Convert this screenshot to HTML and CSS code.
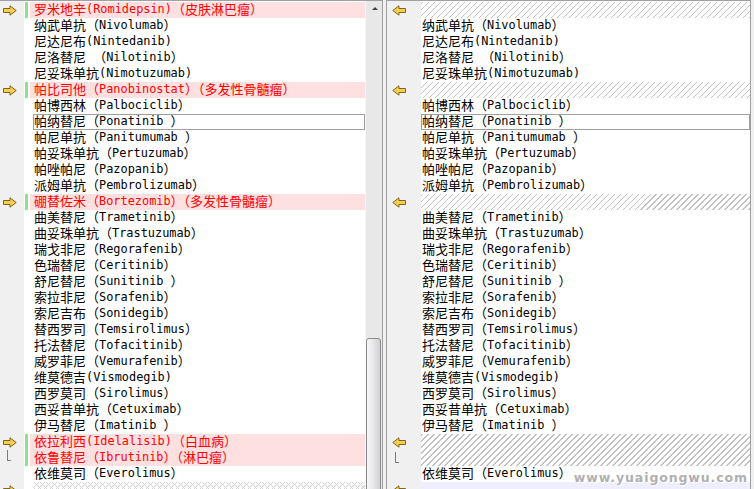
FILE: index.html
```html
<!DOCTYPE html>
<html lang="zh-CN">
<head>
<meta charset="utf-8">
<title>Compare</title>
<link rel="stylesheet" href="styles.css">
</head>
<body>
<div class="app">
  <section class="pane left">
    <div class="gutter gl">
      <div class="g"><svg class="arr" width="14" height="11" viewBox="0 0 14 11"><path d="M0.5 3.5H7V0.8L13.2 5.5L7 10.2V7.5H0.5Z"/></svg></div>
      <div class="g"></div><div class="g"></div><div class="g"></div><div class="g"></div>
      <div class="g"><svg class="arr" width="14" height="11" viewBox="0 0 14 11"><path d="M0.5 3.5H7V0.8L13.2 5.5L7 10.2V7.5H0.5Z"/></svg></div>
      <div class="g"></div><div class="g"></div><div class="g"></div><div class="g"></div><div class="g"></div><div class="g"></div>
      <div class="g"><svg class="arr" width="14" height="11" viewBox="0 0 14 11"><path d="M0.5 3.5H7V0.8L13.2 5.5L7 10.2V7.5H0.5Z"/></svg></div>
      <div class="g"></div><div class="g"></div><div class="g"></div><div class="g"></div><div class="g"></div><div class="g"></div><div class="g"></div>
      <div class="g"></div><div class="g"></div><div class="g"></div><div class="g"></div><div class="g"></div><div class="g"></div><div class="g"></div>
      <div class="g"><svg class="arr" width="14" height="11" viewBox="0 0 14 11"><path d="M0.5 3.5H7V0.8L13.2 5.5L7 10.2V7.5H0.5Z"/></svg></div>
      <div class="g"><span class="brk"></span></div>
      <div class="g"></div>
      <div class="g"><svg class="arr" width="14" height="11" viewBox="0 0 14 11"><path d="M0.5 3.5H7V0.8L13.2 5.5L7 10.2V7.5H0.5Z"/></svg></div>
    </div>
    <div class="text tl">
      <div class="r d">罗米地辛<span class="en">(Romidepsin)</span>（皮肤淋巴瘤）</div>
      <div class="r">纳武单抗（<span class="en">Nivolumab</span>）</div>
      <div class="r">尼达尼布<span class="en">(Nintedanib)</span></div>
      <div class="r">尼洛替尼<span class="en"> </span>（<span class="en">Nilotinib</span>）</div>
      <div class="r">尼妥珠单抗<span class="en">(Nimotuzumab)</span></div>
      <div class="r d">帕比司他（<span class="en">Panobinostat</span>）（多发性骨髓瘤）</div>
      <div class="r">帕博西林（<span class="en">Palbociclib</span>）</div>
      <div class="r cur">帕纳替尼（<span class="en">Ponatinib </span>）</div>
      <div class="r">帕尼单抗（<span class="en">Panitumumab </span>）</div>
      <div class="r">帕妥珠单抗（<span class="en">Pertuzumab</span>）</div>
      <div class="r">帕唑帕尼（<span class="en">Pazopanib</span>）</div>
      <div class="r">派姆单抗（<span class="en">Pembrolizumab</span>）</div>
      <div class="r d">硼替佐米（<span class="en">Bortezomib</span>）（多发性骨髓瘤）</div>
      <div class="r">曲美替尼（<span class="en">Trametinib</span>）</div>
      <div class="r">曲妥珠单抗（<span class="en">Trastuzumab</span>）</div>
      <div class="r">瑞戈非尼（<span class="en">Regorafenib</span>）</div>
      <div class="r">色瑞替尼（<span class="en">Ceritinib</span>）</div>
      <div class="r">舒尼替尼（<span class="en">Sunitinib </span>）</div>
      <div class="r">索拉非尼（<span class="en">Sorafenib</span>）</div>
      <div class="r">索尼吉布（<span class="en">Sonidegib</span>）</div>
      <div class="r">替西罗司（<span class="en">Temsirolimus</span>）</div>
      <div class="r">托法替尼（<span class="en">Tofacitinib</span>）</div>
      <div class="r">威罗菲尼（<span class="en">Vemurafenib</span>）</div>
      <div class="r">维莫德吉<span class="en">(Vismodegib)</span></div>
      <div class="r">西罗莫司（<span class="en">Sirolimus</span>）</div>
      <div class="r">西妥昔单抗（<span class="en">Cetuximab</span>）</div>
      <div class="r">伊马替尼（<span class="en">Imatinib </span>）</div>
      <div class="r d">依拉利西<span class="en">(Idelalisib)</span>（白血病）</div>
      <div class="r d">依鲁替尼（<span class="en">Ibrutinib</span>）（淋巴瘤）</div>
      <div class="r">依维莫司（<span class="en">Everolimus</span>）</div>
      <div class="r x"></div>
    </div>
    <div class="sb">
      <div class="sb-up"><span class="tri"></span></div>
      <div class="sb-track"><div class="thumb" style="margin-top:320px"></div></div>
    </div>
  </section>

  <section class="pane right">
    <div class="gutter gr">
      <div class="g"><svg class="arr" width="14" height="11" viewBox="0 0 14 11"><path d="M13.5 3.5H7V0.8L0.8 5.5L7 10.2V7.5H13.5Z"/></svg></div>
      <div class="g"></div><div class="g"></div><div class="g"></div><div class="g"></div>
      <div class="g"><svg class="arr" width="14" height="11" viewBox="0 0 14 11"><path d="M13.5 3.5H7V0.8L0.8 5.5L7 10.2V7.5H13.5Z"/></svg></div>
      <div class="g"></div><div class="g"></div><div class="g"></div><div class="g"></div><div class="g"></div><div class="g"></div>
      <div class="g"><svg class="arr" width="14" height="11" viewBox="0 0 14 11"><path d="M13.5 3.5H7V0.8L0.8 5.5L7 10.2V7.5H13.5Z"/></svg></div>
      <div class="g"></div><div class="g"></div><div class="g"></div><div class="g"></div><div class="g"></div><div class="g"></div><div class="g"></div>
      <div class="g"></div><div class="g"></div><div class="g"></div><div class="g"></div><div class="g"></div><div class="g"></div><div class="g"></div>
      <div class="g"><svg class="arr" width="14" height="11" viewBox="0 0 14 11"><path d="M13.5 3.5H7V0.8L0.8 5.5L7 10.2V7.5H13.5Z"/></svg></div>
      <div class="g"><span class="brk"></span></div>
      <div class="g"></div>
      <div class="g"><svg class="arr" width="14" height="11" viewBox="0 0 14 11"><path d="M13.5 3.5H7V0.8L0.8 5.5L7 10.2V7.5H13.5Z"/></svg></div>
    </div>
    <div class="text tr">
      <div class="r h"></div>
      <div class="r">纳武单抗（<span class="en">Nivolumab</span>）</div>
      <div class="r">尼达尼布<span class="en">(Nintedanib)</span></div>
      <div class="r">尼洛替尼<span class="en"> </span>（<span class="en">Nilotinib</span>）</div>
      <div class="r">尼妥珠单抗<span class="en">(Nimotuzumab)</span></div>
      <div class="r h"></div>
      <div class="r">帕博西林（<span class="en">Palbociclib</span>）</div>
      <div class="r cur">帕纳替尼（<span class="en">Ponatinib </span>）</div>
      <div class="r">帕尼单抗（<span class="en">Panitumumab </span>）</div>
      <div class="r">帕妥珠单抗（<span class="en">Pertuzumab</span>）</div>
      <div class="r">帕唑帕尼（<span class="en">Pazopanib</span>）</div>
      <div class="r">派姆单抗（<span class="en">Pembrolizumab</span>）</div>
      <div class="r h"></div>
      <div class="r">曲美替尼（<span class="en">Trametinib</span>）</div>
      <div class="r">曲妥珠单抗（<span class="en">Trastuzumab</span>）</div>
      <div class="r">瑞戈非尼（<span class="en">Regorafenib</span>）</div>
      <div class="r">色瑞替尼（<span class="en">Ceritinib</span>）</div>
      <div class="r">舒尼替尼（<span class="en">Sunitinib </span>）</div>
      <div class="r">索拉非尼（<span class="en">Sorafenib</span>）</div>
      <div class="r">索尼吉布（<span class="en">Sonidegib</span>）</div>
      <div class="r">替西罗司（<span class="en">Temsirolimus</span>）</div>
      <div class="r">托法替尼（<span class="en">Tofacitinib</span>）</div>
      <div class="r">威罗菲尼（<span class="en">Vemurafenib</span>）</div>
      <div class="r">维莫德吉<span class="en">(Vismodegib)</span></div>
      <div class="r">西罗莫司（<span class="en">Sirolimus</span>）</div>
      <div class="r">西妥昔单抗（<span class="en">Cetuximab</span>）</div>
      <div class="r">伊马替尼（<span class="en">Imatinib </span>）</div>
      <div class="r h"></div>
      <div class="r h"></div>
      <div class="r">依维莫司（<span class="en">Everolimus</span>）</div>
      <div class="r lav"></div>
    </div>
  </section>

  <div class="wm">www.yuaigongwu.com</div>
</div>
</body>
</html>
```

FILE: styles.css
```css
* { box-sizing: border-box; margin: 0; padding: 0; }
html, body { width: 754px; height: 489px; overflow: hidden; background: #f0f0f0; }
body { font-family: "Noto Sans CJK SC", sans-serif; font-size: 13px; color: #000; }

.app { display: flex; height: 489px; position: relative; }

.pane { display: flex; height: 489px; border-top: 1px solid #a0a0a0; }
.left { width: 383px; border-right: 1px solid #a0a0a0; }
.right { width: 365px; margin-left: 3px; border-left: 1px solid #a0a0a0; border-right: 1px solid #a0a0a0; }

.gutter { background: #f0f0f0; padding-top: 1px; flex: none; }
.gl { width: 24px; }
.gr { width: 34px; }
.g { height: 16px; display: flex; align-items: center; padding-left: 3px; }
.gr .g { padding-left: 5px; }
.arr { display: block; margin-top: 1px; }
.arr path { fill: #f6cd4c; stroke: #7d6420; stroke-width: 1; stroke-linejoin: miter; }

.brk { display: block; align-self: flex-start; width: 4px; height: 11px; border-left: 1px solid #7a7a7a; border-bottom: 1px solid #7a7a7a; margin-left: 4px; }
.gr .brk { margin-top: 2px; margin-left: 3px; }

.text { background: #fff; padding-top: 1px; flex: none; overflow: hidden; }
.tl { width: 341px; }
.tr { width: 329px; }

.r { height: 16px; line-height: 13px; white-space: pre; position: relative; padding-left: 10px; }
.tr .r { padding-left: 1px; }
.en { font-family: "DejaVu Sans Mono", monospace; font-size: 11.9px; vertical-align: 1px; }

.d { color: #f00; background: linear-gradient(90deg, #fff 0 1px, #8fdf8f 1px 4px, #fff 4px 6px, #ffe0e0 6px); }

.cur::after { content: ""; position: absolute; left: 9px; right: 0; top: 0; bottom: 0; border: 1px solid #a0a0a0; }
.tr .cur::after { left: 0; }

.h { background: repeating-linear-gradient(135deg, #fff 0 3.2px, #c2c2c2 3.2px 4.24px); background-attachment: fixed; }
.x { background:
  repeating-linear-gradient(135deg, transparent 0 3.2px, #d4d4d4 3.2px 4.24px),
  repeating-linear-gradient(45deg, #fff 0 3.2px, #d4d4d4 3.2px 4.24px);
  background-attachment: fixed; margin-left: 9px; }
.lav { background: #eeeeff; }

.sb { width: 17px; flex: none; display: flex; flex-direction: column; background: #e8e8e8; border-left: 1px solid #f6f6f6; }
.sb-up { flex: none; height: 17px; display: flex; align-items: center; justify-content: center; }
.tri { width: 0; height: 0; border-left: 3px solid transparent; border-right: 3px solid transparent; border-bottom: 3px solid #404040; margin-top: -3px; margin-left: 1px; }
.sb-track { flex: 1; min-height: 0; overflow: hidden; }
.thumb { width: 15px; height: 170px; border: 1px solid #8a8a8a; border-radius: 3px 3px 0 0; background: linear-gradient(90deg, #f6f6f6 0, #ececec 35%, #d0d0d6 100%); }

.wm { position: absolute; right: 6px; bottom: 4px; font-family: "DejaVu Sans", sans-serif; font-weight: bold; font-size: 12.5px; letter-spacing: 0.9px; color: #b0b0b0; text-shadow: 1px 1px 0 #fff, -1px -1px 0 #fff; line-height: 14px; }
```
